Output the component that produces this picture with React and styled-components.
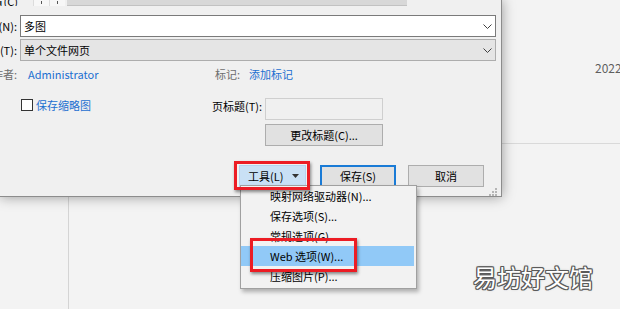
import React from "react";
import styled, { createGlobalStyle, css } from "styled-components";

const Global = createGlobalStyle`
  html, body { margin: 0; padding: 0; background: #f3f3f3; }
  body { width: 620px; height: 309px; overflow: hidden; }
`;

const FONT = `"Noto Sans CJK SC", "Noto Sans", sans-serif`;

const Page = styled.div`
  position: relative;
  width: 620px;
  height: 309px;
  overflow: hidden;
  display: grid;
  grid-template-columns: 502px 1fr;
  grid-template-rows: 197px 1fr;
  background: #f3f3f3;
  font-family: ${FONT};
  font-size: 11px;
  color: #000;
`;

/* ---------- background window ---------- */
const SidePanel = styled.div`
  grid-column: 2;
  grid-row: 1;
  display: flex;
  flex-direction: column;
`;

const DateRow = styled.div`
  height: 144px;
  box-sizing: border-box;
  border-bottom: 1px solid #d9d9d9;
  padding: 61px 0 0 93px;
  font-size: 12px;
  line-height: 14px;
  color: #5f5f5f;
  white-space: nowrap;
`;

const BottomArea = styled.div`
  grid-column: 1 / -1;
  grid-row: 2;
  display: flex;
`;

const NavColumn = styled.div`
  width: 68px;
  border-right: 1px solid #d4d4d4;
`;

/* ---------- dialog ---------- */
const Dialog = styled.div`
  grid-column: 1;
  grid-row: 1;
  background: #f0f0f0;
  border-right: 1px solid #8c8c8c;
  border-bottom: 1px solid #8c8c8c;
  box-shadow: 0 0 12px rgba(0, 0, 0, 0.38);
  padding-right: 5px;
  overflow: hidden;
`;

const Body = styled.div`
  margin-left: -80px;
  display: flex;
  flex-direction: column;
`;

const TopStrip = styled.div`
  height: 6px;
  display: flex;
  align-items: flex-end;
  overflow: hidden;
`;

const StripLabel = styled.div`
  width: 98px;
  text-align: right;
  line-height: 14px;
  flex: none;
  white-space: nowrap;
  margin-bottom: -2px;
`;

const NavBox = styled.div`
  width: 16px;
  height: 14px;
  flex: none;
  margin-left: ${(p) => p.$ml || 0}px;
  background: #f7f7f7;
  border-left: 1px solid #dcdcdc;
  box-sizing: border-box;
  display: flex;
  justify-content: center;
  align-items: flex-end;
`;

const Tick = styled.span`
  width: 1px;
  height: 3px;
  margin-bottom: 2px;
  background: #555;
`;

const PathBar = styled.div`
  width: 340px;
  height: 14px;
  flex: none;
  margin-left: 2px;
  box-sizing: border-box;
  background: #d8d8d8;
  border-bottom: 1px solid #c2c2c2;
`;

const FieldRow = styled.div`
  display: flex;
  align-items: center;
  height: 22px;
  margin-top: ${(p) => p.$mt}px;
`;

const FieldLabel = styled.div`
  width: 97px;
  margin-right: 3px;
  flex: none;
  text-align: right;
  white-space: nowrap;
  line-height: 14px;
`;

const Field = styled.div`
  flex: 1;
  height: 22px;
  box-sizing: border-box;
  border: 1px solid ${(p) => (p.$select ? "#adadad" : "#7a7a7a")};
  background: ${(p) => (p.$select ? "#e5e5e5" : "#ffffff")};
  display: flex;
  align-items: center;
  justify-content: space-between;
  padding: 0 3px 0 3px;
  line-height: 14px;
`;

const Chevron = () => (
  <svg width="9" height="5" viewBox="0 0 9 5">
    <polyline points="0.5,0.5 4.5,4.5 8.5,0.5" fill="none" stroke="#404040" strokeWidth="1" />
  </svg>
);

const Meta = styled.div`
  display: flex;
  margin-top: 5px;
`;

const MetaLeft = styled.div`
  width: 292px;
  flex: none;
  display: flex;
  flex-direction: column;
`;

const MetaRight = styled.div`
  display: flex;
  flex-direction: column;
`;

const InfoLine = styled.div`
  height: 16px;
  display: flex;
  align-items: center;
  padding-left: ${(p) => p.$pl || 0}px;
  line-height: 14px;
  white-space: nowrap;
`;

const MutedLabel = styled.span`
  color: #6d6d6d;
  ${(p) =>
    p.$w &&
    css`
      width: ${p.$w}px;
      text-align: right;
      flex: none;
    `}
`;

const Link = styled.span`
  color: #1c6fd0;
  margin-left: ${(p) => p.$ml || 0}px;
`;

const CheckLine = styled.label`
  margin-top: 16px;
  height: 14px;
  display: flex;
  align-items: center;
  padding-left: 101px;
  line-height: 14px;
  white-space: nowrap;
`;

const CheckBox = styled.span`
  width: 12px;
  height: 12px;
  box-sizing: border-box;
  border: 1px solid #333;
  background: #fff;
  margin-right: 3px;
  flex: none;
`;

const TitleLine = styled.div`
  margin-top: 16px;
  display: flex;
  align-items: flex-start;
`;

const TitleLabel = styled.div`
  width: 53px;
  flex: none;
  line-height: 14px;
  margin-top: 1px;
  white-space: nowrap;
`;

const TitleInput = styled.div`
  width: 118px;
  height: 22px;
  box-sizing: border-box;
  background: #f0f0f0;
  border: 1px solid #cfcfcf;
`;

const Button = styled.div`
  position: relative;
  box-sizing: border-box;
  width: ${(p) => p.$w}px;
  height: 22px;
  flex: none;
  margin-left: ${(p) => p.$ml || 0}px;
  margin-top: ${(p) => p.$mt || 0}px;
  background: #e1e1e1;
  border: 1px solid #adadad;
  display: flex;
  align-items: center;
  justify-content: center;
  line-height: 14px;
  white-space: nowrap;
  ${(p) =>
    p.$default &&
    css`
      border: 2px solid #1a7bd6;
    `}
  ${(p) =>
    p.$split &&
    css`
      background: #c9e0f5;
      border-color: #b4d3ef;
      justify-content: space-between;
      padding: 0 6px 0 8px;
    `}
`;

const ButtonRow = styled.div`
  margin-top: 19px;
  display: flex;
  justify-content: flex-end;
  padding-right: 12px;
`;

const GripRow = styled.div`
  height: 9px;
  display: flex;
  justify-content: flex-end;
  align-items: flex-end;
  margin-right: -1px;
`;

const Grip = () => (
  <svg width="8" height="8" viewBox="0 0 8 8">
    {[
      [6, 0],
      [6, 3],
      [3, 3],
      [6, 6],
      [3, 6],
      [0, 6],
    ].map(([x, y]) => (
      <rect key={`${x}-${y}`} x={x} y={y} width="2" height="2" fill="#b5b5b5" />
    ))}
  </svg>
);

const Caret = () => (
  <svg width="7" height="4" viewBox="0 0 7 4">
    <polygon points="0,0 7,0 3.5,4" fill="#333" />
  </svg>
);

const RedMark = styled.span`
  position: absolute;
  z-index: 3;
  box-sizing: border-box;
  border: 3px solid #ec1c24;
  box-shadow: 1px 2px 3px rgba(0, 0, 0, 0.45);
  pointer-events: none;
  ${(p) => p.$area}
`;

/* ---------- popup menu ---------- */
const Menu = styled.div`
  position: absolute;
  left: 240px;
  top: 185px;
  width: 177px;
  box-sizing: border-box;
  z-index: 2;
  background: #f2f2f2;
  border: 1px solid #a0a0a0;
  padding: 0 2px 2px 0;
  box-shadow: 2px 3px 4px rgba(0, 0, 0, 0.28);
  font-family: ${FONT};
  font-size: 11px;
`;

const MenuItem = styled.div`
  position: relative;
  height: 20px;
  line-height: 20px;
  padding-left: 29px;
  white-space: nowrap;
  color: #000;
  background: ${(p) => (p.$active ? "#91c9f7" : "transparent")};
`;

const Watermark = styled.div`
  position: absolute;
  left: 473px;
  top: 263px;
  z-index: 4;
  font-family: ${FONT};
  font-size: 24px;
  line-height: 28px;
  color: #ffffff;
  white-space: nowrap;
  text-shadow: 1px 0 0 #5a5a5a, -1px 0 0 #5a5a5a, 0 1px 0 #5a5a5a, 0 -1px 0 #5a5a5a,
    1px 1px 0 #5a5a5a, -1px -1px 0 #5a5a5a, 1px -1px 0 #5a5a5a, -1px 1px 0 #5a5a5a,
    0 0 3px rgba(0, 0, 0, 0.35);
`;

const menuItems = [
  "映射网络驱动器(N)...",
  "保存选项(S)...",
  "常规选项(G)...",
  "Web 选项(W)...",
  "压缩图片(P)...",
];

export default function App() {
  return (
    <>
      <Global />
      <Page>
        <SidePanel>
          <DateRow>2022</DateRow>
        </SidePanel>
        <BottomArea>
          <NavColumn />
        </BottomArea>

        <Dialog>
          <Body>
            <TopStrip>
              <StripLabel>保存位置(C)</StripLabel>
              <NavBox $ml={15}>
                <Tick />
              </NavBox>
              <NavBox>
                <Tick />
              </NavBox>
              <PathBar />
            </TopStrip>

            <FieldRow $mt={9}>
              <FieldLabel>文件名(N):</FieldLabel>
              <Field>
                <span>多图</span>
                <Chevron />
              </Field>
            </FieldRow>
            <FieldRow $mt={2}>
              <FieldLabel>保存类型(T):</FieldLabel>
              <Field $select>
                <span>单个文件网页</span>
                <Chevron />
              </Field>
            </FieldRow>

            <Meta>
              <MetaLeft>
                <InfoLine>
                  <MutedLabel $w={97}>作者:</MutedLabel>
                  <Link $ml={11}>Administrator</Link>
                </InfoLine>
                <CheckLine>
                  <CheckBox />
                  <Link>保存缩略图</Link>
                </CheckLine>
              </MetaLeft>
              <MetaRight>
                <InfoLine $pl={3}>
                  <MutedLabel>标记:</MutedLabel>
                  <Link $ml={9}>添加标记</Link>
                </InfoLine>
                <TitleLine>
                  <TitleLabel>页标题(T):</TitleLabel>
                  <TitleInput />
                </TitleLine>
                <Button $w={118} $ml={53} $mt={4}>
                  更改标题(C)...
                </Button>
              </MetaRight>
            </Meta>

            <ButtonRow>
              <Button $w={67} $split>
                <span>工具(L)</span>
                <Caret />
                <RedMark $area="top:-5px;bottom:-4px;left:-6px;right:-5px;" />
              </Button>
              <Button $w={76} $ml={14} $default>
                保存(S)
              </Button>
              <Button $w={76} $ml={12}>
                取消
              </Button>
            </ButtonRow>
            <GripRow>
              <Grip />
            </GripRow>
          </Body>
        </Dialog>

        <Menu>
          {menuItems.map((t, i) => (
            <MenuItem key={t} $active={i === 3}>
              {t}
              {i === 3 && <RedMark $area="left:9px;top:-8px;width:107px;height:34px;" />}
            </MenuItem>
          ))}
        </Menu>

        <Watermark>易坊好文馆</Watermark>
      </Page>
    </>
  );
}
